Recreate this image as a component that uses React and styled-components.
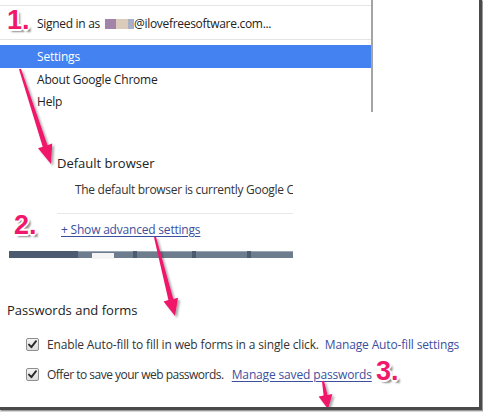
import React from "react";
import styled, { createGlobalStyle } from "styled-components";

const Global = createGlobalStyle`
  html, body { margin: 0; padding: 0; background: #d6d6d6; }
  body { width: 483px; height: 412px; overflow: hidden; font-family: "Open Sans", "Noto Sans", sans-serif; }
`;

const Frame = styled.div`
  position: relative;
  width: 479px;
  height: 407px;
  background: #fff;
  border-right: 3px solid #4a4a4a;
  border-bottom: 3px solid #4a4a4a;
  box-shadow: 1px 1px 0 #9a9a9a;
  display: flex;
  flex-direction: column;
  overflow: hidden;
`;

const Menu = styled.div`
  width: 371px;
  height: 112px;
  border-right: 2px solid #a4a4a4;
  display: flex;
  flex-direction: column;
  font-size: 12px;
  letter-spacing: -0.2px;
  color: #222;
`;

const MenuRule = styled.div`
  height: 1px;
  background: #e4e4e4;
  margin-top: ${(p) => p.$top || 0}px;
`;

const ProfileRow = styled.div`
  height: 33px;
  display: flex;
  align-items: center;
  padding-left: 37px;
  gap: 4px;
  padding-top: 2px;
  box-sizing: border-box;
  letter-spacing: -0.3px;
`;

const Swatches = styled.span`
  display: inline-flex;
  height: 10px;
  margin-left: 1px;
  vertical-align: -1px;
`;

const Swatch = styled.span`
  width: ${(p) => p.$w}px;
  height: 10px;
  background: ${(p) => p.$c};
`;

const MenuSpacer = styled.div`
  height: 5px;
`;

const MenuItem = styled.div`
  height: ${(p) => p.$h || 23}px;
  display: flex;
  align-items: center;
  padding-left: 37px;
  background: ${(p) => (p.$active ? "#4382f0" : "transparent")};
  color: ${(p) => (p.$active ? "#fff" : "#222")};
`;

const DefaultSection = styled.div`
  margin-left: 57px;
  width: 236px;
  overflow: hidden;
  white-space: nowrap;
  margin-top: 42px;
  display: flex;
  flex-direction: column;
`;

const SectionTitle = styled.div`
  font-size: 13px;
  color: #222;
  line-height: 18px;
`;

const Desc = styled.div`
  font-size: 12px;
  letter-spacing: -0.3px;
  color: #333;
  padding-left: 18px;
  margin-top: 9px;
  line-height: 18px;
`;

const SectionRule = styled.div`
  height: 1px;
  background: #e8e8e8;
  margin-top: 14px;
`;

const Link = styled.a`
  color: #3c4f9e;
  text-decoration: ${(p) => (p.$underline ? "underline" : "none")};
  text-underline-offset: 2px;
  cursor: pointer;
`;

const LinkRow = styled.div`
  padding-left: 4px;
  margin-top: 7px;
  line-height: 18px;
  font-size: 12px;
  letter-spacing: -0.2px;
`;

const Taskbar = styled.div`
  margin-left: 9px;
  margin-top: 12px;
  width: 284px;
  height: 7px;
  background: #4c5b70;
  display: flex;
  gap: 4px;
  padding-left: 69px;
  box-sizing: border-box;
`;

const TaskButton = styled.div`
  width: ${(p) => p.$w}px;
  height: 7px;
  background: #6e7d8e;
  border-top: 1px solid #9aa6b2;
  box-sizing: border-box;
`;

const TaskIcon = styled.div`
  width: 22px;
  height: 6px;
  background: #f4f4f4;
  margin-left: 14px;
  margin-top: 1px;
`;

const PasswordsSection = styled.div`
  padding-left: 7px;
  margin-top: 43px;
  display: flex;
  flex-direction: column;
  white-space: nowrap;
`;

const CheckRow = styled.div`
  display: flex;
  align-items: center;
  padding-left: 19px;
  font-size: 12px;
  letter-spacing: -0.15px;
  color: #333;
  height: 20px;
  margin-top: ${(p) => p.$top}px;
  gap: 8px;
`;

const RowText = styled.span`
  letter-spacing: ${(p) => p.$ls}px;
  margin-right: ${(p) => p.$gap}px;
`;

const Box = styled.span`
  width: 11px;
  height: 11px;
  border: 1px solid #8f8f8f;
  border-radius: 2px;
  background: linear-gradient(#f4f4f4, #dcdcdc);
  display: inline-flex;
  align-items: center;
  justify-content: center;
  flex: none;
`;

const Label = styled.div`
  position: absolute;
  left: ${(p) => p.$x}px;
  top: ${(p) => p.$y}px;
  font-family: "Liberation Sans", Arial, sans-serif;
  font-weight: bold;
  font-size: 27px;
  line-height: 1;
  color: #f0186a;
  text-shadow:
    -1px -1px 0 #fff, 1px -1px 0 #fff, -1px 1px 0 #fff, 1px 1px 0 #fff,
    0 -2px 0 #fff, 0 2px 0 #fff, -2px 0 0 #fff, 2px 0 0 #fff,
    3px 3px 2px rgba(0,0,0,0.45);
`;

const Overlay = styled.svg`
  position: absolute;
  left: 0;
  top: 0;
  pointer-events: none;
`;

function arrowPoints([x0, y0], [x1, y1], w0, w1, headLen, headW) {
  const dx = x1 - x0, dy = y1 - y0;
  const len = Math.hypot(dx, dy);
  const ux = dx / len, uy = dy / len;
  const nx = -uy, ny = ux;
  const bx = x1 - ux * headLen, by = y1 - uy * headLen;
  const p = (x, y) => `${x.toFixed(1)},${y.toFixed(1)}`;
  return [
    p(x0 + nx * w0 / 2, y0 + ny * w0 / 2),
    p(bx + nx * w1 / 2, by + ny * w1 / 2),
    p(bx + nx * headW / 2, by + ny * headW / 2),
    p(x1, y1),
    p(bx - nx * headW / 2, by - ny * headW / 2),
    p(bx - nx * w1 / 2, by - ny * w1 / 2),
    p(x0 - nx * w0 / 2, y0 - ny * w0 / 2),
  ].join(" ");
}

const arrows = [
  { from: [20, 69], to: [51, 164], w0: 2, w1: 5, hl: 19, hw: 15 },
  { from: [155, 237], to: [175, 316], w0: 2, w1: 5, hl: 17, hw: 15 },
  { from: [323, 381], to: [328, 409], w0: 2, w1: 4, hl: 14, hw: 14 },
];

const Check = () => (
  <svg width="9" height="9" viewBox="0 0 9 9">
    <path d="M1 4.6 L3.4 7.2 L8 1.2" fill="none" stroke="#2a2a2a" strokeWidth="1.9" strokeLinecap="round" strokeLinejoin="round" />
  </svg>
);

export default function App() {
  return (
    <>
      <Global />
      <Frame>
        <Menu>
          <MenuRule $top={5} />
          <ProfileRow>
            Signed in as
            <span>
              <Swatches>
                <Swatch $w={11} $c="#a284ab" />
                <Swatch $w={12} $c="#dacbbb" />
                <Swatch $w={6} $c="#a9b0c6" />
              </Swatches>
              @ilovefreesoftware.com...
            </span>
          </ProfileRow>
          <MenuRule />
          <MenuSpacer />
          <MenuItem $active>Settings</MenuItem>
          <MenuItem>About Google Chrome</MenuItem>
          <MenuItem $h={21}>Help</MenuItem>
        </Menu>

        <DefaultSection>
          <SectionTitle>Default browser</SectionTitle>
          <Desc>The default browser is currently Google Chrome.</Desc>
          <SectionRule />
          <LinkRow>
            <Link $underline>+ Show advanced settings</Link>
          </LinkRow>
        </DefaultSection>

        <Taskbar>
          <TaskButton $w={58}>
            <TaskIcon />
          </TaskButton>
          <TaskButton $w={58} />
          <TaskButton $w={54} />
          <TaskButton $w={45} />
        </Taskbar>

        <PasswordsSection>
          <SectionTitle>Passwords and forms</SectionTitle>
          <CheckRow $top={15}>
            <Box><Check /></Box>
            <span>
              <RowText $ls={-0.15} $gap={6}>Enable Auto-fill to fill in web forms in a single click.</RowText>
              <Link>Manage Auto-fill settings</Link>
            </span>
          </CheckRow>
          <CheckRow $top={10}>
            <Box><Check /></Box>
            <span>
              <RowText $ls={-0.5} $gap={8}>Offer to save your web passwords.</RowText>
              <Link $underline>Manage saved passwords</Link>
            </span>
          </CheckRow>
        </PasswordsSection>

        <Label $x={7} $y={7}>1.</Label>
        <Label $x={14} $y={212}>2.</Label>
        <Label $x={376} $y={358}>3.</Label>

        <Overlay width="479" height="407" viewBox="0 0 479 407">
          <defs>
            <filter id="sh" x="-50%" y="-50%" width="200%" height="200%">
              <feDropShadow dx="2" dy="2" stdDeviation="1.2" floodColor="#000" floodOpacity="0.35" />
            </filter>
          </defs>
          {arrows.map((a, i) => (
            <polygon key={i} points={arrowPoints(a.from, a.to, a.w0, a.w1, a.hl, a.hw)} fill="#f0186a" filter="url(#sh)" />
          ))}
        </Overlay>
      </Frame>
    </>
  );
}
